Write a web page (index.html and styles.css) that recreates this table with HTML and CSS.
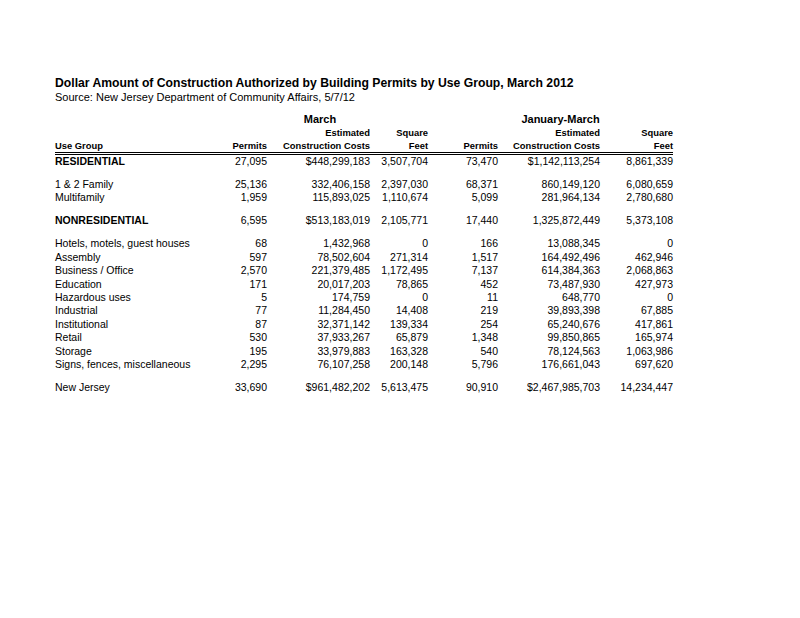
FILE: index.html
```html
<!DOCTYPE html>
<html>
<head>
<meta charset="utf-8">
<link rel="stylesheet" href="styles.css">
</head>
<body>
<div class="page">
  <h1 class="title">Dollar Amount of Construction Authorized by Building Permits by Use Group, March 2012</h1>
  <p class="source">Source: New Jersey Department of Community Affairs, 5/7/12</p>
  <table class="data">
    <colgroup>
      <col class="c-group"><col class="c-permits"><col class="c-costs"><col class="c-feet">
      <col class="c-permits2"><col class="c-costs2"><col class="c-feet2">
    </colgroup>
    <thead>
      <tr class="h-period">
        <th></th>
        <th colspan="3" class="period">March</th>
        <th colspan="3" class="period period-ytd">January-March</th>
      </tr>
      <tr class="h-top">
        <th></th><th></th><th class="num">Estimated</th><th class="num">Square</th>
        <th></th><th class="num">Estimated</th><th class="num">Square</th>
      </tr>
      <tr class="h-main">
        <th class="label">Use Group</th><th class="num">Permits</th><th class="num">Construction Costs</th><th class="num">Feet</th>
        <th class="num">Permits</th><th class="num">Construction Costs</th><th class="num">Feet</th>
      </tr>
    </thead>
    <tbody>
      <tr class="major"><td>RESIDENTIAL</td><td>27,095</td><td>$448,299,183</td><td>3,507,704</td><td>73,470</td><td>$1,142,113,254</td><td>8,861,339</td></tr>
      <tr class="spacer"><td colspan="7"></td></tr>
      <tr><td>1 &amp; 2 Family</td><td>25,136</td><td>332,406,158</td><td>2,397,030</td><td>68,371</td><td>860,149,120</td><td>6,080,659</td></tr>
      <tr><td>Multifamily</td><td>1,959</td><td>115,893,025</td><td>1,110,674</td><td>5,099</td><td>281,964,134</td><td>2,780,680</td></tr>
      <tr class="spacer"><td colspan="7"></td></tr>
      <tr class="major"><td>NONRESIDENTIAL</td><td>6,595</td><td>$513,183,019</td><td>2,105,771</td><td>17,440</td><td>1,325,872,449</td><td>5,373,108</td></tr>
      <tr class="spacer"><td colspan="7"></td></tr>
      <tr><td>Hotels, motels, guest houses</td><td>68</td><td>1,432,968</td><td>0</td><td>166</td><td>13,088,345</td><td>0</td></tr>
      <tr><td>Assembly</td><td>597</td><td>78,502,604</td><td>271,314</td><td>1,517</td><td>164,492,496</td><td>462,946</td></tr>
      <tr><td>Business / Office</td><td>2,570</td><td>221,379,485</td><td>1,172,495</td><td>7,137</td><td>614,384,363</td><td>2,068,863</td></tr>
      <tr><td>Education</td><td>171</td><td>20,017,203</td><td>78,865</td><td>452</td><td>73,487,930</td><td>427,973</td></tr>
      <tr><td>Hazardous uses</td><td>5</td><td>174,759</td><td>0</td><td>11</td><td>648,770</td><td>0</td></tr>
      <tr><td>Industrial</td><td>77</td><td>11,284,450</td><td>14,408</td><td>219</td><td>39,893,398</td><td>67,885</td></tr>
      <tr><td>Institutional</td><td>87</td><td>32,371,142</td><td>139,334</td><td>254</td><td>65,240,676</td><td>417,861</td></tr>
      <tr><td>Retail</td><td>530</td><td>37,933,267</td><td>65,879</td><td>1,348</td><td>99,850,865</td><td>165,974</td></tr>
      <tr><td>Storage</td><td>195</td><td>33,979,883</td><td>163,328</td><td>540</td><td>78,124,563</td><td>1,063,986</td></tr>
      <tr><td>Signs, fences, miscellaneous</td><td>2,295</td><td>76,107,258</td><td>200,148</td><td>5,796</td><td>176,661,043</td><td>697,620</td></tr>
      <tr class="spacer"><td colspan="7"></td></tr>
      <tr class="total"><td>New Jersey</td><td>33,690</td><td>$961,482,202</td><td>5,613,475</td><td>90,910</td><td>$2,467,985,703</td><td>14,234,447</td></tr>
    </tbody>
  </table>
</div>
</body>
</html>
```

FILE: styles.css
```css
html, body {
  margin: 0;
  padding: 0;
  background: #ffffff;
}

body {
  font-family: "Liberation Sans", Arial, sans-serif;
  color: #000000;
}

.page {
  padding: 75px 0 0 55px;
}

.title {
  margin: 0;
  font-size: 12.2px;
  line-height: 16px;
  font-weight: bold;
}

.source {
  margin: 0;
  font-size: 11px;
  line-height: 12px;
}

.data {
  margin-top: 9px;
  border-collapse: collapse;
  table-layout: fixed;
  width: 618px;
}

.c-group { width: 157px; }
.c-permits { width: 55px; }
.c-costs { width: 103px; }
.c-feet { width: 58px; }
.c-permits2 { width: 70px; }
.c-costs2 { width: 102px; }
.c-feet2 { width: 73px; }

.data th, .data td {
  padding: 0;
  white-space: nowrap;
}

.data th {
  font-weight: bold;
  font-size: 9.4px;
  line-height: 13px;
  text-align: right;
}

.data th.label {
  text-align: left;
}

.h-period th.period {
  font-size: 11px;
  line-height: 14px;
  text-align: center;
}

.h-period th.period-ytd {
  padding-left: 20px;
}

.h-main th {
  border-bottom: 3px double #000000;
}

.data td {
  font-size: 10.5px;
  line-height: 13.4px;
  text-align: right;
}

.data td:first-child {
  text-align: left;
}

.data tr.major td:first-child {
  font-weight: bold;
}

.data tr.spacer td {
  height: 9.6px;
  line-height: 0;
}
```
